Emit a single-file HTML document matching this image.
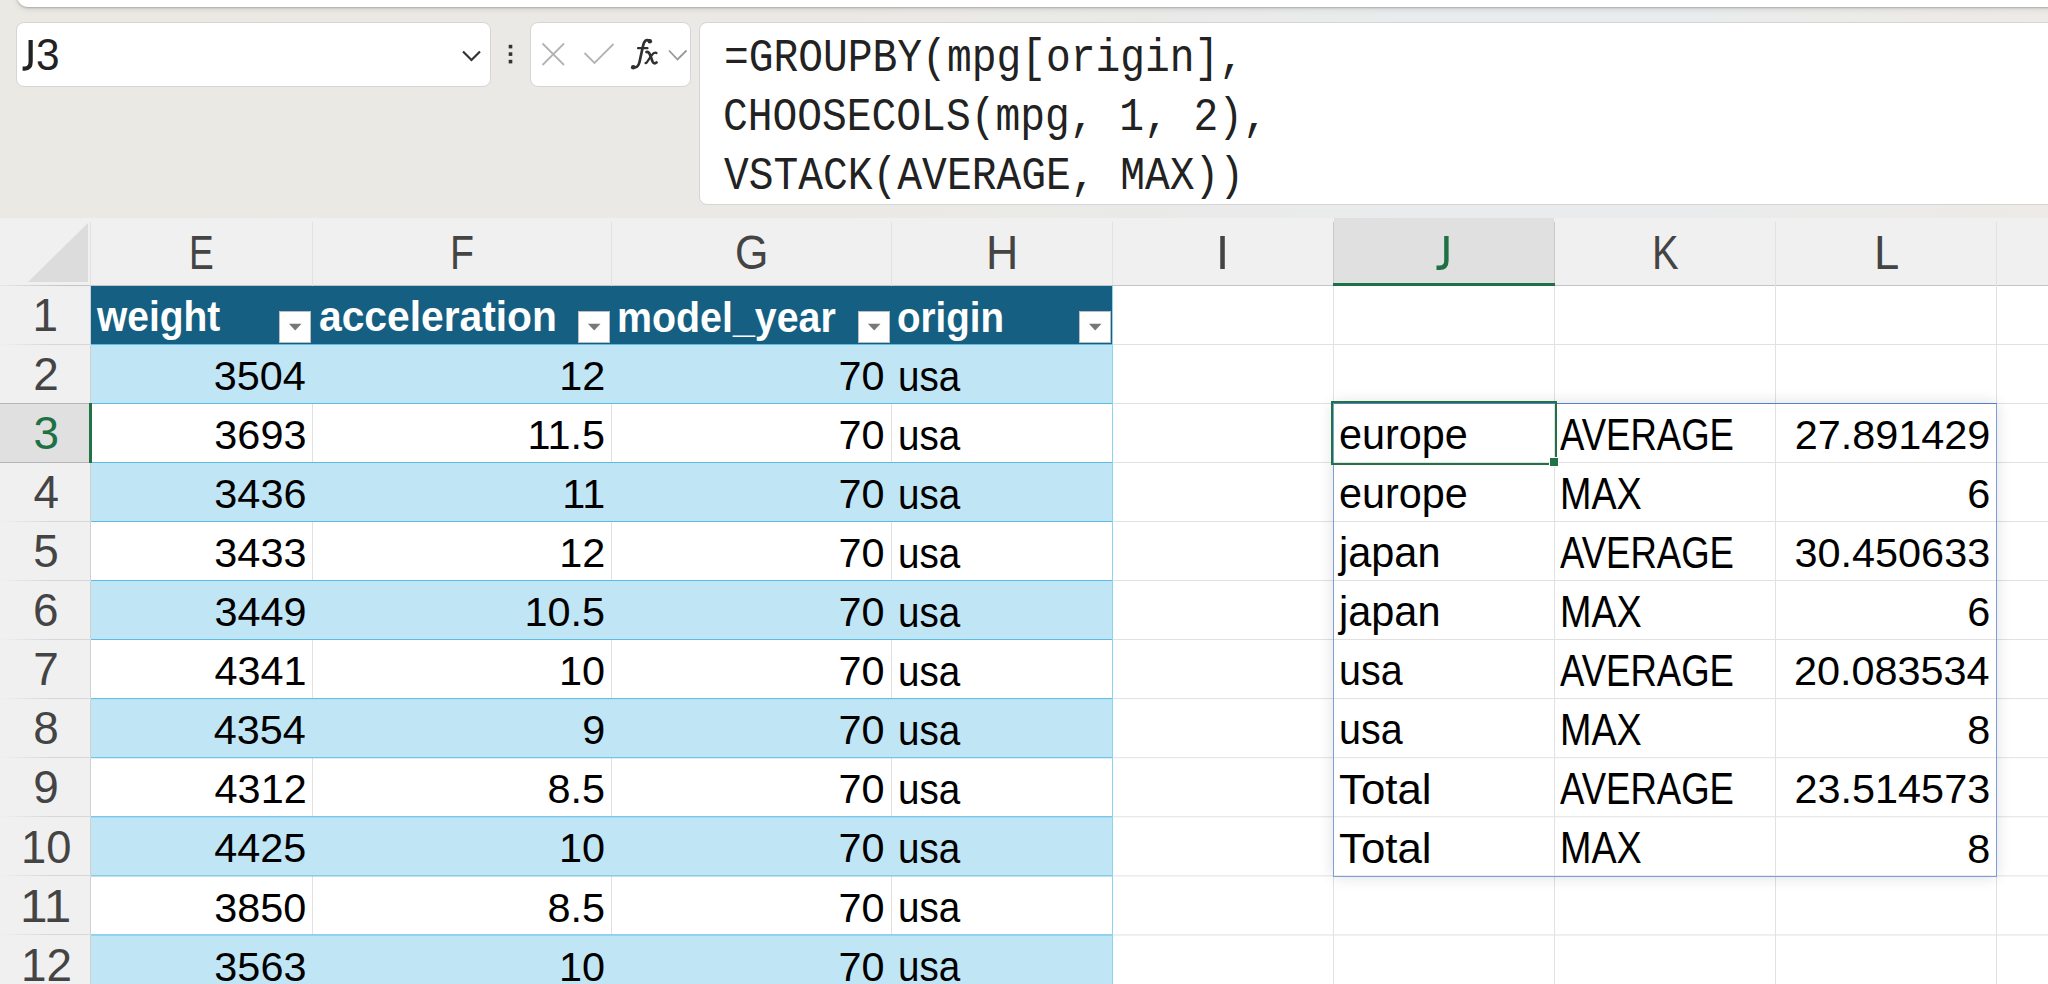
<!DOCTYPE html><html><head><meta charset="utf-8"><style>
html,body{margin:0;padding:0;width:2048px;height:984px;overflow:hidden;background:#fff}
.a{position:absolute;box-sizing:border-box}
.t{position:absolute;white-space:pre}
</style></head><body>
<div class="a" style="left:0;top:0;width:2048px;height:218px;background:linear-gradient(to right,#EBE9E4 0px,#EBE9E5 850px,#E9EAE8 1150px,#EAEBEC 1400px,#EAEBEC 1700px,#EBEBE9 1850px,#EDEAE7 2048px)"></div>
<div class="a" style="left:17px;top:-40px;width:2100px;height:47px;background:#fff;border-radius:0 0 0 11px;box-shadow:0 1px 2px rgba(0,0,0,0.22),0 2px 6px rgba(0,0,0,0.10)"></div>
<div class="a" style="left:16px;top:22px;width:475px;height:65px;background:#fff;border:1.5px solid #D5D5D5;border-radius:8px"></div>
<svg class="a" style="left:0;top:0" width="2048" height="218"><polyline points="463,51.5 471.5,60 480,51.5" fill="none" stroke="#333" stroke-width="2.2"/><rect x="508.7" y="44.8" width="3.6" height="3.6" fill="#333"/><rect x="508.7" y="52.3" width="3.6" height="3.6" fill="#333"/><rect x="508.7" y="59.8" width="3.6" height="3.6" fill="#333"/></svg>
<div class="a" style="left:530px;top:22px;width:161px;height:64.5px;background:#fff;border:1.5px solid #D5D5D5;border-radius:8px"></div>
<svg class="a" style="left:0;top:0" width="2048" height="218"><path d="M542.5,43.5 L564,65 M564,43.5 L542.5,65" stroke="#B3B3B3" stroke-width="1.8" fill="none"/><polyline points="584.5,53 594.5,63 613.5,44" fill="none" stroke="#B3B3B3" stroke-width="1.8"/><polyline points="669,50.5 677.5,59.5 686.5,50.5" fill="none" stroke="#999" stroke-width="1.8"/></svg>
<div class="a" style="left:699px;top:22px;width:1400px;height:183px;background:#fff;border:1.5px solid #D5D5D5;border-radius:8px"></div>
<div class="a" style="left:0;top:218px;width:2048px;height:67px;background:#F0F0F0"></div>
<div class="a" style="left:0;top:285px;width:91px;height:700px;background:#F0F0F0"></div>
<div class="a" style="left:1334px;top:218px;width:220px;height:67px;background:#E0E0E0"></div>
<div class="a" style="left:0;top:403px;width:89px;height:59px;background:#E0E0E0"></div>
<div class="a" style="left:0;top:285px;width:90px;height:1px;background:linear-gradient(to right,rgba(196,196,196,0.2),#C4C4C4 70%)"></div>
<div class="a" style="left:90px;top:285px;width:1958px;height:1px;background:#C4C4C4"></div>
<div class="a" style="left:90px;top:285px;width:1px;height:700px;background:#D0D0D0"></div>
<svg class="a" style="left:0;top:0" width="100" height="300"><polygon points="88,223 88,282 28,282" fill="#DCDCDC"/></svg>
<div class="a" style="left:90px;top:222px;width:1px;height:63px;background:#E2E2E2"></div>
<div class="a" style="left:312px;top:222px;width:1px;height:63px;background:#E2E2E2"></div>
<div class="a" style="left:611px;top:222px;width:1px;height:63px;background:#E2E2E2"></div>
<div class="a" style="left:891px;top:222px;width:1px;height:63px;background:#E2E2E2"></div>
<div class="a" style="left:1112px;top:222px;width:1px;height:63px;background:#E2E2E2"></div>
<div class="a" style="left:1333px;top:222px;width:1px;height:63px;background:#C8C8C8"></div>
<div class="a" style="left:1554px;top:222px;width:1px;height:63px;background:#C8C8C8"></div>
<div class="a" style="left:1775px;top:222px;width:1px;height:63px;background:#E2E2E2"></div>
<div class="a" style="left:1996px;top:222px;width:1px;height:63px;background:#E2E2E2"></div>
<div class="a" style="left:0;top:344px;width:90px;height:1px;background:linear-gradient(to right,rgba(215,215,215,0),#D7D7D7 55%)"></div>
<div class="a" style="left:0;top:403px;width:90px;height:1px;background:linear-gradient(to right,rgba(215,215,215,0),#D7D7D7 55%)"></div>
<div class="a" style="left:0;top:462px;width:90px;height:1px;background:linear-gradient(to right,rgba(215,215,215,0),#D7D7D7 55%)"></div>
<div class="a" style="left:0;top:521px;width:90px;height:1px;background:linear-gradient(to right,rgba(215,215,215,0),#D7D7D7 55%)"></div>
<div class="a" style="left:0;top:580px;width:90px;height:1px;background:linear-gradient(to right,rgba(215,215,215,0),#D7D7D7 55%)"></div>
<div class="a" style="left:0;top:639px;width:90px;height:1px;background:linear-gradient(to right,rgba(215,215,215,0),#D7D7D7 55%)"></div>
<div class="a" style="left:0;top:698px;width:90px;height:1px;background:linear-gradient(to right,rgba(215,215,215,0),#D7D7D7 55%)"></div>
<div class="a" style="left:0;top:757px;width:90px;height:1px;background:linear-gradient(to right,rgba(215,215,215,0),#D7D7D7 55%)"></div>
<div class="a" style="left:0;top:816px;width:90px;height:1px;background:linear-gradient(to right,rgba(215,215,215,0),#D7D7D7 55%)"></div>
<div class="a" style="left:0;top:875px;width:90px;height:1px;background:linear-gradient(to right,rgba(215,215,215,0),#D7D7D7 55%)"></div>
<div class="a" style="left:0;top:934px;width:90px;height:1px;background:linear-gradient(to right,rgba(215,215,215,0),#D7D7D7 55%)"></div>
<div class="a" style="left:0;top:994px;width:90px;height:1px;background:linear-gradient(to right,rgba(215,215,215,0),#D7D7D7 55%)"></div>
<div class="a" style="left:312px;top:285px;width:1px;height:700px;background:#E1E1E1"></div>
<div class="a" style="left:611px;top:285px;width:1px;height:700px;background:#E1E1E1"></div>
<div class="a" style="left:891px;top:285px;width:1px;height:700px;background:#E1E1E1"></div>
<div class="a" style="left:1112px;top:285px;width:1px;height:700px;background:#E1E1E1"></div>
<div class="a" style="left:1333px;top:285px;width:1px;height:700px;background:#E1E1E1"></div>
<div class="a" style="left:1554px;top:285px;width:1px;height:700px;background:#E1E1E1"></div>
<div class="a" style="left:1775px;top:285px;width:1px;height:700px;background:#E1E1E1"></div>
<div class="a" style="left:1996px;top:285px;width:1px;height:700px;background:#E1E1E1"></div>
<svg class="a" style="left:0;top:0" width="2048" height="984"><rect x="90" y="344.00" width="1960" height="1" fill="#E1E1E1"/><rect x="90" y="403.00" width="1960" height="1" fill="#E1E1E1"/><rect x="90" y="462.00" width="1960" height="1" fill="#E1E1E1"/><rect x="90" y="521.00" width="1960" height="1" fill="#E1E1E1"/><rect x="90" y="580.00" width="1960" height="1" fill="#E1E1E1"/><rect x="90" y="639.00" width="1960" height="1" fill="#E1E1E1"/><rect x="90" y="698.09" width="1960" height="1" fill="#E1E1E1"/><rect x="90" y="757.18" width="1960" height="1" fill="#E1E1E1"/><rect x="90" y="816.27" width="1960" height="1" fill="#E1E1E1"/><rect x="90" y="875.36" width="1960" height="1" fill="#E1E1E1"/><rect x="90" y="934.45" width="1960" height="1" fill="#E1E1E1"/><rect x="90" y="993.54" width="1960" height="1" fill="#E1E1E1"/></svg>
<div class="a" style="left:1333px;top:283px;width:222px;height:3px;background:#1E7145"></div>
<div class="a" style="left:91px;top:286px;width:1021px;height:58px;background:#156082"></div>
<svg class="a" style="left:0;top:0" width="2048" height="984"><rect x="91" y="344.00" width="1021" height="59.00" fill="#C0E5F5"/><rect x="91" y="344.00" width="1021" height="1" fill="#5BBDE6"/><rect x="91" y="403.00" width="1021" height="1" fill="#5BBDE6"/><rect x="91" y="462.00" width="1021" height="59.00" fill="#C0E5F5"/><rect x="91" y="462.00" width="1021" height="1" fill="#5BBDE6"/><rect x="91" y="521.00" width="1021" height="1" fill="#5BBDE6"/><rect x="91" y="580.00" width="1021" height="59.00" fill="#C0E5F5"/><rect x="91" y="580.00" width="1021" height="1" fill="#5BBDE6"/><rect x="91" y="639.00" width="1021" height="1" fill="#5BBDE6"/><rect x="91" y="698.09" width="1021" height="59.09" fill="#C0E5F5"/><rect x="91" y="698.09" width="1021" height="1" fill="#5BBDE6"/><rect x="91" y="757.18" width="1021" height="1" fill="#5BBDE6"/><rect x="91" y="816.27" width="1021" height="59.09" fill="#C0E5F5"/><rect x="91" y="816.27" width="1021" height="1" fill="#5BBDE6"/><rect x="91" y="875.36" width="1021" height="1" fill="#5BBDE6"/><rect x="91" y="934.45" width="1021" height="59.09" fill="#C0E5F5"/><rect x="91" y="934.45" width="1021" height="1" fill="#5BBDE6"/></svg>
<div class="a" style="left:1111.5px;top:285px;width:1.3px;height:700px;background:#8DD2EF"></div>
<div class="a" style="left:279.2px;top:310.7px;width:32px;height:32px;background:#fff;border:1px solid #BDBDBD"></div>
<svg class="a" style="left:0;top:0" width="1200" height="400"><polygon points="288.9,323.8 301.5,323.8 295.2,330.6" fill="#777"/></svg>
<div class="a" style="left:578.2px;top:310.7px;width:32px;height:32px;background:#fff;border:1px solid #BDBDBD"></div>
<svg class="a" style="left:0;top:0" width="1200" height="400"><polygon points="587.9,323.8 600.5,323.8 594.2,330.6" fill="#777"/></svg>
<div class="a" style="left:858.2px;top:310.7px;width:32px;height:32px;background:#fff;border:1px solid #BDBDBD"></div>
<svg class="a" style="left:0;top:0" width="1200" height="400"><polygon points="867.9,323.8 880.5,323.8 874.2,330.6" fill="#777"/></svg>
<div class="a" style="left:1079.2px;top:310.7px;width:32px;height:32px;background:#fff;border:1px solid #BDBDBD"></div>
<svg class="a" style="left:0;top:0" width="1200" height="400"><polygon points="1088.9,323.8 1101.5,323.8 1095.2,330.6" fill="#777"/></svg>
<div class="a" style="left:1333px;top:403px;width:664px;height:474px;border:1.4px solid #7C9EDA;border-top-color:#557FCB;box-shadow:0 0 14px rgba(0,0,0,0.13)"></div>
<div class="a" style="left:1331px;top:401px;width:225.6px;height:64px;border:2.8px solid #217346"></div>
<div class="a" style="left:1549.6px;top:458px;width:8px;height:8px;background:#217346;outline:1.5px solid #fff"></div>
<div class="a" style="left:0;top:403px;width:90px;height:1px;background:#B5B5B5"></div>
<div class="a" style="left:0;top:462px;width:90px;height:1px;background:#B5B5B5"></div>
<div class="a" style="left:88.5px;top:403px;width:3px;height:60px;background:#217346"></div>
<svg class="a" style="left:0;top:0" width="100" height="100"><path d="M30.65,39.9 V61.8 Q30.65,68.6 24.6,68.6 H22.6" fill="none" stroke="#222" stroke-width="4.2"/></svg>
<div class="t" style="left:35.99px;top:33.48px;font-size:44.50px;line-height:44.50px;font-family:'Liberation Sans',sans-serif;color:#222;transform:scale(0.9529,1.0000);transform-origin:0 37.82px;">3</div>
<svg class="a" style="left:0;top:0" width="700" height="100"><g fill="none" stroke="#2f2f2f" stroke-linecap="round"><path d="M649.5,40.5 C646,39 644,41 643,46 L639.5,62 C638.5,66.5 636.5,68 633.5,67" stroke-width="2.7"/><path d="M638,48.2 L647.5,48.2" stroke-width="2.2"/><path d="M646.5,52 C648.5,51.5 649.5,53 650.5,56 L652.5,61.5 C653.5,63.5 655,63.8 656.5,62.5" stroke-width="2.7"/><path d="M656.5,53 C655,52 653.5,52.8 651.5,55.5 L648,60.5 C647,62.5 646,63.5 645.5,63" stroke-width="2.2"/></g><circle cx="649.8" cy="41.2" r="2.3" fill="#2f2f2f"/><circle cx="633.2" cy="67.2" r="2.3" fill="#2f2f2f"/></svg>
<div class="t" style="left:724.25px;top:36.72px;font-size:45.50px;line-height:45.50px;font-family:'Liberation Mono',monospace;color:#222;transform:scale(0.9070,1.0000);transform-origin:0 34.58px;">=GROUPBY(mpg[origin],</div>
<div class="t" style="left:723.33px;top:96.12px;font-size:45.50px;line-height:45.50px;font-family:'Liberation Mono',monospace;color:#222;transform:scale(0.9070,1.0000);transform-origin:0 34.58px;">CHOOSECOLS(mpg, 1, 2),</div>
<div class="t" style="left:723.79px;top:155.42px;font-size:45.50px;line-height:45.50px;font-family:'Liberation Mono',monospace;color:#222;transform:scale(0.9070,1.0000);transform-origin:0 34.58px;">VSTACK(AVERAGE, MAX))</div>
<div class="t" style="left:189.16px;top:228.21px;font-size:48.70px;line-height:48.70px;font-family:'Liberation Sans',sans-serif;color:#444;transform:scale(0.7615,1.0000);transform-origin:0 41.40px;">E</div>
<div class="t" style="left:449.88px;top:228.21px;font-size:48.70px;line-height:48.70px;font-family:'Liberation Sans',sans-serif;color:#444;transform:scale(0.8062,1.0000);transform-origin:0 41.40px;">F</div>
<div class="t" style="left:735.36px;top:228.21px;font-size:48.70px;line-height:48.70px;font-family:'Liberation Sans',sans-serif;color:#444;transform:scale(0.8805,1.0000);transform-origin:0 41.40px;">G</div>
<div class="t" style="left:985.93px;top:228.21px;font-size:48.70px;line-height:48.70px;font-family:'Liberation Sans',sans-serif;color:#444;transform:scale(0.9183,1.0000);transform-origin:0 41.40px;">H</div>
<div class="t" style="left:1215.73px;top:228.21px;font-size:48.70px;line-height:48.70px;font-family:'Liberation Sans',sans-serif;color:#444;">I</div>
<svg class="a" style="left:0;top:0" width="1500" height="300"><path d="M1446.4,235.9 V260.8 Q1446.4,267.8 1439.6,267.8 H1436.5" fill="none" stroke="#1E7145" stroke-width="4.4"/></svg>
<div class="t" style="left:1651.87px;top:228.21px;font-size:48.70px;line-height:48.70px;font-family:'Liberation Sans',sans-serif;color:#444;transform:scale(0.8206,1.0000);transform-origin:0 41.40px;">K</div>
<div class="t" style="left:1873.68px;top:228.21px;font-size:48.70px;line-height:48.70px;font-family:'Liberation Sans',sans-serif;color:#444;transform:scale(0.9312,1.0000);transform-origin:0 41.40px;">L</div>
<div class="t" style="left:32.62px;top:293.29px;font-size:45.90px;line-height:45.90px;font-family:'Liberation Sans',sans-serif;color:#444;">1</div>
<div class="t" style="left:33.24px;top:352.29px;font-size:45.90px;line-height:45.90px;font-family:'Liberation Sans',sans-serif;color:#444;">2</div>
<div class="t" style="left:33.38px;top:411.29px;font-size:45.90px;line-height:45.90px;font-family:'Liberation Sans',sans-serif;color:#1E7145;">3</div>
<div class="t" style="left:33.38px;top:470.29px;font-size:45.90px;line-height:45.90px;font-family:'Liberation Sans',sans-serif;color:#444;">4</div>
<div class="t" style="left:33.29px;top:529.28px;font-size:45.90px;line-height:45.90px;font-family:'Liberation Sans',sans-serif;color:#444;">5</div>
<div class="t" style="left:33.08px;top:588.28px;font-size:45.90px;line-height:45.90px;font-family:'Liberation Sans',sans-serif;color:#444;">6</div>
<div class="t" style="left:33.22px;top:647.28px;font-size:45.90px;line-height:45.90px;font-family:'Liberation Sans',sans-serif;color:#444;">7</div>
<div class="t" style="left:33.24px;top:706.38px;font-size:45.90px;line-height:45.90px;font-family:'Liberation Sans',sans-serif;color:#444;">8</div>
<div class="t" style="left:33.24px;top:765.46px;font-size:45.90px;line-height:45.90px;font-family:'Liberation Sans',sans-serif;color:#444;">9</div>
<div class="t" style="left:20.65px;top:824.55px;font-size:45.90px;line-height:45.90px;font-family:'Liberation Sans',sans-serif;color:#444;transform:scale(0.9877,1.0000);transform-origin:0 39.02px;">10</div>
<div class="t" style="left:20.34px;top:883.64px;font-size:45.90px;line-height:45.90px;font-family:'Liberation Sans',sans-serif;color:#444;transform:scale(1.0786,1.0000);transform-origin:0 39.02px;">11</div>
<div class="t" style="left:20.62px;top:942.74px;font-size:45.90px;line-height:45.90px;font-family:'Liberation Sans',sans-serif;color:#444;transform:scale(0.9987,1.0000);transform-origin:0 39.02px;">12</div>
<div class="t" style="left:97.32px;top:296.48px;font-size:42.50px;line-height:42.50px;font-family:'Liberation Sans',sans-serif;font-weight:bold;color:#fff;transform:scale(0.9164,1.0000);transform-origin:0 36.12px;">weight</div>
<div class="t" style="left:319.02px;top:296.48px;font-size:42.50px;line-height:42.50px;font-family:'Liberation Sans',sans-serif;font-weight:bold;color:#fff;transform:scale(0.9590,1.0000);transform-origin:0 36.12px;">acceleration</div>
<div class="t" style="left:617.40px;top:296.57px;font-size:42.50px;line-height:42.50px;font-family:'Liberation Sans',sans-serif;font-weight:bold;color:#fff;transform:scale(0.9262,1.0000);transform-origin:0 36.12px;">model_year</div>
<div class="t" style="left:897.30px;top:296.57px;font-size:42.50px;line-height:42.50px;font-family:'Liberation Sans',sans-serif;font-weight:bold;color:#fff;transform:scale(0.9062,1.0000);transform-origin:0 36.12px;">origin</div>
<div class="t" style="left:213.73px;top:356.21px;font-size:41.40px;line-height:41.40px;font-family:'Liberation Sans',sans-serif;color:#000;">3504</div>
<div class="t" style="left:559.33px;top:356.21px;font-size:41.40px;line-height:41.40px;font-family:'Liberation Sans',sans-serif;color:#000;">12</div>
<div class="t" style="left:838.48px;top:356.21px;font-size:41.40px;line-height:41.40px;font-family:'Liberation Sans',sans-serif;color:#000;">70</div>
<div class="t" style="left:897.59px;top:354.75px;font-size:43.00px;line-height:43.00px;font-family:'Liberation Sans',sans-serif;color:#000;transform:scale(0.8975,1.0000);transform-origin:0 36.55px;">usa</div>
<div class="t" style="left:214.35px;top:415.21px;font-size:41.40px;line-height:41.40px;font-family:'Liberation Sans',sans-serif;color:#000;">3693</div>
<div class="t" style="left:527.54px;top:415.21px;font-size:41.40px;line-height:41.40px;font-family:'Liberation Sans',sans-serif;color:#000;">11.5</div>
<div class="t" style="left:838.48px;top:415.21px;font-size:41.40px;line-height:41.40px;font-family:'Liberation Sans',sans-serif;color:#000;">70</div>
<div class="t" style="left:897.59px;top:413.75px;font-size:43.00px;line-height:43.00px;font-family:'Liberation Sans',sans-serif;color:#000;transform:scale(0.8975,1.0000);transform-origin:0 36.55px;">usa</div>
<div class="t" style="left:214.35px;top:474.21px;font-size:41.40px;line-height:41.40px;font-family:'Liberation Sans',sans-serif;color:#000;">3436</div>
<div class="t" style="left:562.36px;top:474.21px;font-size:41.40px;line-height:41.40px;font-family:'Liberation Sans',sans-serif;color:#000;">11</div>
<div class="t" style="left:838.48px;top:474.21px;font-size:41.40px;line-height:41.40px;font-family:'Liberation Sans',sans-serif;color:#000;">70</div>
<div class="t" style="left:897.59px;top:472.75px;font-size:43.00px;line-height:43.00px;font-family:'Liberation Sans',sans-serif;color:#000;transform:scale(0.8975,1.0000);transform-origin:0 36.55px;">usa</div>
<div class="t" style="left:214.35px;top:533.21px;font-size:41.40px;line-height:41.40px;font-family:'Liberation Sans',sans-serif;color:#000;">3433</div>
<div class="t" style="left:559.33px;top:533.21px;font-size:41.40px;line-height:41.40px;font-family:'Liberation Sans',sans-serif;color:#000;">12</div>
<div class="t" style="left:838.48px;top:533.21px;font-size:41.40px;line-height:41.40px;font-family:'Liberation Sans',sans-serif;color:#000;">70</div>
<div class="t" style="left:897.59px;top:531.75px;font-size:43.00px;line-height:43.00px;font-family:'Liberation Sans',sans-serif;color:#000;transform:scale(0.8975,1.0000);transform-origin:0 36.55px;">usa</div>
<div class="t" style="left:214.47px;top:592.21px;font-size:41.40px;line-height:41.40px;font-family:'Liberation Sans',sans-serif;color:#000;">3449</div>
<div class="t" style="left:524.47px;top:592.21px;font-size:41.40px;line-height:41.40px;font-family:'Liberation Sans',sans-serif;color:#000;">10.5</div>
<div class="t" style="left:838.48px;top:592.21px;font-size:41.40px;line-height:41.40px;font-family:'Liberation Sans',sans-serif;color:#000;">70</div>
<div class="t" style="left:897.59px;top:590.75px;font-size:43.00px;line-height:43.00px;font-family:'Liberation Sans',sans-serif;color:#000;transform:scale(0.8975,1.0000);transform-origin:0 36.55px;">usa</div>
<div class="t" style="left:214.56px;top:651.21px;font-size:41.40px;line-height:41.40px;font-family:'Liberation Sans',sans-serif;color:#000;">4341</div>
<div class="t" style="left:558.88px;top:651.21px;font-size:41.40px;line-height:41.40px;font-family:'Liberation Sans',sans-serif;color:#000;">10</div>
<div class="t" style="left:838.48px;top:651.21px;font-size:41.40px;line-height:41.40px;font-family:'Liberation Sans',sans-serif;color:#000;">70</div>
<div class="t" style="left:897.59px;top:649.75px;font-size:43.00px;line-height:43.00px;font-family:'Liberation Sans',sans-serif;color:#000;transform:scale(0.8975,1.0000);transform-origin:0 36.55px;">usa</div>
<div class="t" style="left:213.73px;top:710.30px;font-size:41.40px;line-height:41.40px;font-family:'Liberation Sans',sans-serif;color:#000;">4354</div>
<div class="t" style="left:582.23px;top:710.30px;font-size:41.40px;line-height:41.40px;font-family:'Liberation Sans',sans-serif;color:#000;">9</div>
<div class="t" style="left:838.48px;top:710.30px;font-size:41.40px;line-height:41.40px;font-family:'Liberation Sans',sans-serif;color:#000;">70</div>
<div class="t" style="left:897.59px;top:708.84px;font-size:43.00px;line-height:43.00px;font-family:'Liberation Sans',sans-serif;color:#000;transform:scale(0.8975,1.0000);transform-origin:0 36.55px;">usa</div>
<div class="t" style="left:214.60px;top:769.39px;font-size:41.40px;line-height:41.40px;font-family:'Liberation Sans',sans-serif;color:#000;">4312</div>
<div class="t" style="left:547.49px;top:769.39px;font-size:41.40px;line-height:41.40px;font-family:'Liberation Sans',sans-serif;color:#000;">8.5</div>
<div class="t" style="left:838.48px;top:769.39px;font-size:41.40px;line-height:41.40px;font-family:'Liberation Sans',sans-serif;color:#000;">70</div>
<div class="t" style="left:897.59px;top:767.93px;font-size:43.00px;line-height:43.00px;font-family:'Liberation Sans',sans-serif;color:#000;transform:scale(0.8975,1.0000);transform-origin:0 36.55px;">usa</div>
<div class="t" style="left:214.27px;top:828.48px;font-size:41.40px;line-height:41.40px;font-family:'Liberation Sans',sans-serif;color:#000;">4425</div>
<div class="t" style="left:558.88px;top:828.48px;font-size:41.40px;line-height:41.40px;font-family:'Liberation Sans',sans-serif;color:#000;">10</div>
<div class="t" style="left:838.48px;top:828.48px;font-size:41.40px;line-height:41.40px;font-family:'Liberation Sans',sans-serif;color:#000;">70</div>
<div class="t" style="left:897.59px;top:827.02px;font-size:43.00px;line-height:43.00px;font-family:'Liberation Sans',sans-serif;color:#000;transform:scale(0.8975,1.0000);transform-origin:0 36.55px;">usa</div>
<div class="t" style="left:214.14px;top:887.57px;font-size:41.40px;line-height:41.40px;font-family:'Liberation Sans',sans-serif;color:#000;">3850</div>
<div class="t" style="left:547.49px;top:887.57px;font-size:41.40px;line-height:41.40px;font-family:'Liberation Sans',sans-serif;color:#000;">8.5</div>
<div class="t" style="left:838.48px;top:887.57px;font-size:41.40px;line-height:41.40px;font-family:'Liberation Sans',sans-serif;color:#000;">70</div>
<div class="t" style="left:897.59px;top:886.11px;font-size:43.00px;line-height:43.00px;font-family:'Liberation Sans',sans-serif;color:#000;transform:scale(0.8975,1.0000);transform-origin:0 36.55px;">usa</div>
<div class="t" style="left:214.35px;top:946.66px;font-size:41.40px;line-height:41.40px;font-family:'Liberation Sans',sans-serif;color:#000;">3563</div>
<div class="t" style="left:558.88px;top:946.66px;font-size:41.40px;line-height:41.40px;font-family:'Liberation Sans',sans-serif;color:#000;">10</div>
<div class="t" style="left:838.48px;top:946.66px;font-size:41.40px;line-height:41.40px;font-family:'Liberation Sans',sans-serif;color:#000;">70</div>
<div class="t" style="left:897.59px;top:945.20px;font-size:43.00px;line-height:43.00px;font-family:'Liberation Sans',sans-serif;color:#000;transform:scale(0.8975,1.0000);transform-origin:0 36.55px;">usa</div>
<div class="t" style="left:1339.26px;top:413.35px;font-size:43.00px;line-height:43.00px;font-family:'Liberation Sans',sans-serif;color:#000;transform:scale(0.9623,1.0000);transform-origin:0 36.55px;">europe</div>
<div class="t" style="left:1560.23px;top:413.64px;font-size:43.60px;line-height:43.60px;font-family:'Liberation Sans',sans-serif;color:#000;transform:scale(0.8380,1.0000);transform-origin:0 37.06px;">AVERAGE</div>
<div class="t" style="left:1794.65px;top:415.31px;font-size:41.40px;line-height:41.40px;font-family:'Liberation Sans',sans-serif;color:#000;">27.891429</div>
<div class="t" style="left:1339.26px;top:472.35px;font-size:43.00px;line-height:43.00px;font-family:'Liberation Sans',sans-serif;color:#000;transform:scale(0.9623,1.0000);transform-origin:0 36.55px;">europe</div>
<div class="t" style="left:1560.31px;top:472.64px;font-size:43.60px;line-height:43.60px;font-family:'Liberation Sans',sans-serif;color:#000;transform:scale(0.8656,1.0000);transform-origin:0 37.06px;">MAX</div>
<div class="t" style="left:1967.20px;top:474.31px;font-size:41.40px;line-height:41.40px;font-family:'Liberation Sans',sans-serif;color:#000;">6</div>
<div class="t" style="left:1339.44px;top:531.35px;font-size:43.00px;line-height:43.00px;font-family:'Liberation Sans',sans-serif;color:#000;transform:scale(0.9642,1.0000);transform-origin:0 36.55px;">japan</div>
<div class="t" style="left:1560.23px;top:531.64px;font-size:43.60px;line-height:43.60px;font-family:'Liberation Sans',sans-serif;color:#000;transform:scale(0.8380,1.0000);transform-origin:0 37.06px;">AVERAGE</div>
<div class="t" style="left:1794.52px;top:533.31px;font-size:41.40px;line-height:41.40px;font-family:'Liberation Sans',sans-serif;color:#000;">30.450633</div>
<div class="t" style="left:1339.44px;top:590.35px;font-size:43.00px;line-height:43.00px;font-family:'Liberation Sans',sans-serif;color:#000;transform:scale(0.9642,1.0000);transform-origin:0 36.55px;">japan</div>
<div class="t" style="left:1560.31px;top:590.64px;font-size:43.60px;line-height:43.60px;font-family:'Liberation Sans',sans-serif;color:#000;transform:scale(0.8656,1.0000);transform-origin:0 37.06px;">MAX</div>
<div class="t" style="left:1967.20px;top:592.31px;font-size:41.40px;line-height:41.40px;font-family:'Liberation Sans',sans-serif;color:#000;">6</div>
<div class="t" style="left:1338.64px;top:649.35px;font-size:43.00px;line-height:43.00px;font-family:'Liberation Sans',sans-serif;color:#000;transform:scale(0.9170,1.0000);transform-origin:0 36.55px;">usa</div>
<div class="t" style="left:1560.23px;top:649.64px;font-size:43.60px;line-height:43.60px;font-family:'Liberation Sans',sans-serif;color:#000;transform:scale(0.8380,1.0000);transform-origin:0 37.06px;">AVERAGE</div>
<div class="t" style="left:1793.90px;top:651.31px;font-size:41.40px;line-height:41.40px;font-family:'Liberation Sans',sans-serif;color:#000;">20.083534</div>
<div class="t" style="left:1338.64px;top:708.44px;font-size:43.00px;line-height:43.00px;font-family:'Liberation Sans',sans-serif;color:#000;transform:scale(0.9170,1.0000);transform-origin:0 36.55px;">usa</div>
<div class="t" style="left:1560.31px;top:708.73px;font-size:43.60px;line-height:43.60px;font-family:'Liberation Sans',sans-serif;color:#000;transform:scale(0.8656,1.0000);transform-origin:0 37.06px;">MAX</div>
<div class="t" style="left:1967.16px;top:710.40px;font-size:41.40px;line-height:41.40px;font-family:'Liberation Sans',sans-serif;color:#000;">8</div>
<div class="t" style="left:1338.54px;top:767.53px;font-size:43.00px;line-height:43.00px;font-family:'Liberation Sans',sans-serif;color:#000;transform:scale(1.0185,1.0000);transform-origin:0 36.55px;">Total</div>
<div class="t" style="left:1560.23px;top:767.82px;font-size:43.60px;line-height:43.60px;font-family:'Liberation Sans',sans-serif;color:#000;transform:scale(0.8380,1.0000);transform-origin:0 37.06px;">AVERAGE</div>
<div class="t" style="left:1794.52px;top:769.49px;font-size:41.40px;line-height:41.40px;font-family:'Liberation Sans',sans-serif;color:#000;">23.514573</div>
<div class="t" style="left:1338.54px;top:826.62px;font-size:43.00px;line-height:43.00px;font-family:'Liberation Sans',sans-serif;color:#000;transform:scale(1.0185,1.0000);transform-origin:0 36.55px;">Total</div>
<div class="t" style="left:1560.31px;top:826.91px;font-size:43.60px;line-height:43.60px;font-family:'Liberation Sans',sans-serif;color:#000;transform:scale(0.8656,1.0000);transform-origin:0 37.06px;">MAX</div>
<div class="t" style="left:1967.16px;top:828.58px;font-size:41.40px;line-height:41.40px;font-family:'Liberation Sans',sans-serif;color:#000;">8</div>
</body></html>
